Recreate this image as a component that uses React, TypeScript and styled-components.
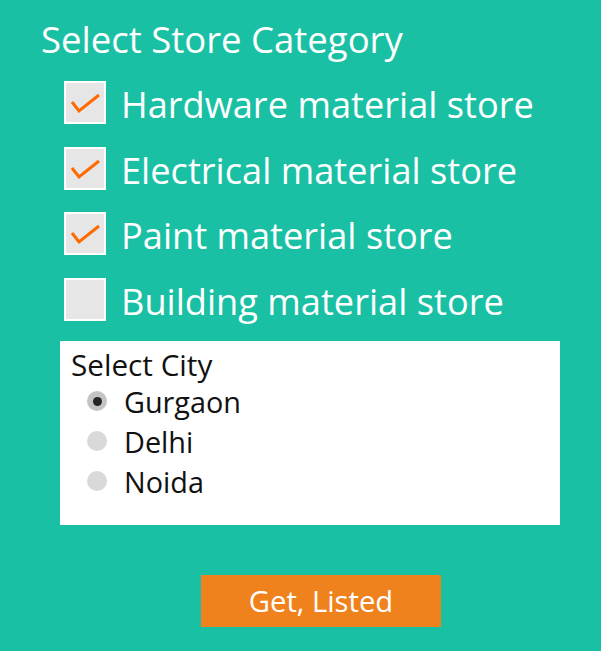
import React, { useState } from "react";
import styled, { createGlobalStyle } from "styled-components";

const Global = createGlobalStyle`
  html, body { margin: 0; padding: 0; }
  body { background: #1ac0a4; font-family: "Open Sans", Lato, sans-serif; }
`;

const Page = styled.div`
  width: 601px;
  height: 651px;
  box-sizing: border-box;
  background: #1ac0a4;
  padding: 17px 0 0 41px;
  display: flex;
  flex-direction: column;
  align-items: flex-start;
`;

const Title = styled.h1`
  margin: 0;
  font-weight: 400;
  font-size: 36.5px;
  line-height: 44px;
  color: #ffffff;
`;

const CheckList = styled.div`
  margin: 20px 0 0 23px;
  display: flex;
  flex-direction: column;
  gap: 22.5px;
`;

const CheckRow = styled.label`
  display: flex;
  align-items: center;
  gap: 15px;
  height: 43px;
  color: #ffffff;
  font-size: 36.2px;
  cursor: pointer;
`;

const RowText = styled.span`
  padding-top: 3px;
  white-space: nowrap;
`;

const Box = styled.span`
  box-sizing: border-box;
  width: 42px;
  height: 43px;
  border: 2px solid #ffffff;
  background: #e6e6e6;
  display: flex;
  flex-shrink: 0;
`;

const CityBox = styled.div`
  margin: 20.5px 0 0 19px;
  width: 500px;
  height: 184px;
  box-sizing: border-box;
  background: #ffffff;
  padding: 8px 0 0 11px;
`;

const CityTitle = styled.div`
  font-size: 29.7px;
  line-height: 32px;
  color: #111111;
`;

const RadioRow = styled.label`
  display: flex;
  align-items: center;
  gap: 17px;
  height: 40px;
  margin-left: 16px;
  font-size: 28.8px;
  color: #111111;
  cursor: pointer;
`;

const Radio = styled.span<{ $on: boolean }>`
  width: 20px;
  height: 20px;
  border-radius: 50%;
  background: ${(p) => (p.$on ? "#c4c4c4" : "#d9d9d9")};
  display: flex;
  align-items: center;
  justify-content: center;
  flex-shrink: 0;
  &::after {
    content: "";
    width: 9px;
    height: 9px;
    border-radius: 50%;
    background: ${(p) => (p.$on ? "#262626" : "transparent")};
  }
`;

const Button = styled.button`
  margin: 50px 0 0 160px;
  width: 240px;
  height: 52px;
  border: none;
  padding: 0;
  background: #f0821e;
  color: #ffffff;
  font-family: inherit;
  font-size: 29.2px;
  cursor: pointer;
`;

const Check = () => (
  <svg width="38" height="39" viewBox="0 0 38 39">
    <polyline
      points="6,19 13,28 33,12"
      fill="none"
      stroke="#ff6a00"
      strokeWidth="3"
      strokeLinejoin="miter"
    />
  </svg>
);

const stores = [
  { name: "Hardware material store", checked: true },
  { name: "Electrical material store", checked: true },
  { name: "Paint material store", checked: true },
  { name: "Building material store", checked: false },
];

const cities = ["Gurgaon", "Delhi", "Noida"];

export default function App() {
  const [checked, setChecked] = useState(stores.map((s) => s.checked));
  const [city, setCity] = useState("Gurgaon");
  return (
    <Page>
      <Global />
      <Title>Select Store Category</Title>
      <CheckList>
        {stores.map((s, i) => (
          <CheckRow
            key={s.name}
            onClick={() => setChecked((c) => c.map((v, j) => (j === i ? !v : v)))}
          >
            <Box>{checked[i] && <Check />}</Box>
            <RowText>{s.name}</RowText>
          </CheckRow>
        ))}
      </CheckList>
      <CityBox>
        <CityTitle>Select City</CityTitle>
        {cities.map((c) => (
          <RadioRow key={c} onClick={() => setCity(c)}>
            <Radio $on={city === c} />
            {c}
          </RadioRow>
        ))}
      </CityBox>
      <Button>Get, Listed</Button>
    </Page>
  );
}
